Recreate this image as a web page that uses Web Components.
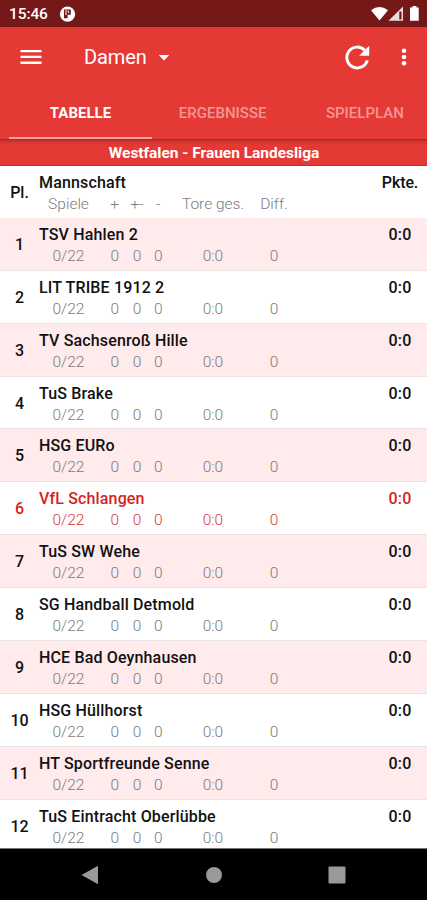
<!DOCTYPE html>
<html lang="de">
<head>
<meta charset="UTF-8">
<meta name="viewport" content="width=device-width, initial-scale=1">
<title>Damen - Tabelle</title>
<style>
    html, body { margin: 0; height: 100%; }
    body { font-family: Roboto, 'Liberation Sans', sans-serif; background: #000; overflow: hidden; }
</style>
</head>
<body>
<league-app></league-app>

<script>
class StatusBar extends HTMLElement {
    connectedCallback() {
        this.attachShadow({ mode: 'open' });
        this.shadowRoot.innerHTML = `
            <style>
                :host { display: flex; align-items: center; flex: none; height: 27px; box-sizing: border-box; padding: 1px 7px 0 9px; background: #741818; color: #fff; }
                .time { font-size: 15.5px; font-weight: 500; line-height: 26px; width: 50px; letter-spacing: -0.1px; }
                .right { margin-left: auto; }
                svg { display: block; }
            </style>
            <span class="time"><slot></slot></span>
            <svg width="17" height="17" viewBox="0 0 17 17">
                <circle cx="8.5" cy="8.2" r="7.6" fill="#fff"/>
                <path d="M5 3.500h6.800v5.200H8.600v3.600H5z" fill="#741818"/>
                <path d="M7 4v5M9.300 4.500v2.500" stroke="#fff" stroke-width="1" fill="none"/>
            </svg>
            <svg class="right" width="50" height="18" viewBox="0 0 50 18">
                <path d="M1 5.200Q9.500 -1.300 18 5.200L9.500 15.400z" fill="#fff"/>
                <path d="M33 1.500V15.700H18.500z" fill="#fff" fill-opacity=".85"/>
                <path d="M29.300 6.500h2.200v8h-2.200z" fill="#741818"/>
                <path d="M42.500 1h4v1.600h2.200V15.700h-8.700V2.600h2.500z" fill="#fff"/>
            </svg>
        `;
    }
}

class AppToolbar extends HTMLElement {
    connectedCallback() {
        this.attachShadow({ mode: 'open' });
        this.shadowRoot.innerHTML = `
            <style>
                :host { display: flex; align-items: center; flex: none; height: 61px; box-sizing: border-box; padding: 0 20px 2px 20px; background: #e53935; color: #fff; }
                svg { display: block; fill: #fff; }
                .title { font-size: 20px; line-height: 28px; margin-left: 42px; width: 62px; white-space: nowrap; letter-spacing: -0.1px; padding-top: 1px; }
                .arrow { margin-left: 12px; margin-top: 2px; }
                .refresh { margin-left: auto; margin-right: 31px; }
            </style>
            <svg width="22" height="16" viewBox="0 0 22 16"><path d="M.5 1h21v2.300H.5zM.5 6.800h21v2.300H.5zM.5 12.600h21v2.300H.5z"/></svg>
            <span class="title"><slot></slot></span>
            <svg class="arrow" width="12" height="6" viewBox="0 0 12 6"><path d="M.7 0h10.600L6 5.600z"/></svg>
            <svg class="refresh" width="26" height="26" viewBox="0 0 26 26">
                <path d="M20.700 6.200A10.400 10.400 0 1 0 23.300 16.300" fill="none" stroke="#fff" stroke-width="3"/>
                <path d="M25.200 1.800v10H15.200z"/>
            </svg>
            <svg width="6" height="20" viewBox="0 0 6 20"><circle cx="3" cy="3.800" r="2.300"/><circle cx="3" cy="10" r="2.300"/><circle cx="3" cy="16.200" r="2.300"/></svg>
        `;
    }
}

class TabBar extends HTMLElement {
    connectedCallback() {
        this.attachShadow({ mode: 'open' });
        this.shadowRoot.innerHTML = `
            <style>
                :host { display: flex; flex: none; height: 51px; padding-left: 9.4px; background: #e53935; overflow: hidden; }
            </style>
            <slot></slot>
        `;
    }
}

class TabItem extends HTMLElement {
    connectedCallback() {
        this.attachShadow({ mode: 'open' });
        this.shadowRoot.innerHTML = `
            <style>
                :host { display: block; flex: none; width: 142.2px; box-sizing: border-box; text-align: center; white-space: nowrap; font-size: 15px; font-weight: 500; line-height: 50px; color: #f29794; border-bottom: 2px solid transparent; }
                :host([active]) { color: #fff; font-weight: 700; border-bottom-color: #f6a5a2; }
            </style>
            <slot></slot>
        `;
    }
}

class LeagueBanner extends HTMLElement {
    connectedCallback() {
        this.attachShadow({ mode: 'open' });
        this.shadowRoot.innerHTML = `
            <style>
                :host { display: block; flex: none; height: 27px; box-sizing: border-box; border-bottom: 1px solid #e01e1b; background: linear-gradient(#a92a27 0, #c9322f 2px, #e23834 5px, #e53935 8px); color: #fff; text-align: center; font-size: 15.5px; font-weight: 700; line-height: 29px; padding-left: 1px; letter-spacing: -0.02px; }
            </style>
            <slot></slot>
        `;
    }
}

class TableRow extends HTMLElement {
    connectedCallback() {
        const get = name => this.getAttribute(name);
        this.attachShadow({ mode: 'open' });
        this.shadowRoot.innerHTML = `
            <style>
                :host { display: flex; flex: none; height: 52.9px; box-sizing: border-box; border-bottom: 1px solid #e9e3e4; background: #fff; color: #111; --muted: #7c7c7c; }
                :host([tinted]) { background: #ffeaec; }
                :host([own]) { color: #d61f1f; --muted: #d93a3a; }
                :host([head]) { height: 51.9px; border-bottom: 0; }
                .place { width: 39px; text-align: center; font-size: 16px; font-weight: 500; line-height: 54px; }
                .main { flex: 1; padding-top: 6px; }
                .top { display: flex; justify-content: space-between; font-size: 16px; font-weight: 500; line-height: 21px; letter-spacing: 0.15px; white-space: nowrap; }
                .points { width: 54px; text-align: center; }
                :host([head]) .points { letter-spacing: -0.1px; }
                .stats { display: grid; grid-template-columns: 59px 28.5px 21px 21.5px 88px 34px; margin-top: 1px; font-size: 15.5px; font-weight: 300; line-height: 21px; color: var(--muted); text-align: center; white-space: nowrap; }
                .stats span:nth-child(2) { padding-left: 5px; }
            </style>
            <div class="place">${get('place')}</div>
            <div class="main">
                <div class="top"><span><slot></slot></span><span class="points">${get('points')}</span></div>
                <div class="stats">${get('stats').split('|').map(s => `<span>${s}</span>`).join('')}</div>
            </div>
        `;
    }
}

class NavBar extends HTMLElement {
    connectedCallback() {
        this.attachShadow({ mode: 'open' });
        this.shadowRoot.innerHTML = `
            <style>
                :host { display: flex; flex: none; align-items: center; justify-content: space-between; height: 52px; box-sizing: border-box; border-top: 1px solid #777; padding: 0 81px; background: #000; }
                svg { display: block; fill: #999; }
            </style>
            <svg width="18" height="20" viewBox="0 0 18 20"><path d="M.5 10L17 .8v18.400z"/></svg>
            <svg width="18" height="18" viewBox="0 0 18 18"><circle cx="9" cy="9" r="8"/></svg>
            <svg width="18" height="18" viewBox="0 0 18 18"><rect x=".5" y=".5" width="17" height="17" rx="1"/></svg>
        `;
    }
}

const teams = [
    'TSV Hahlen 2', 'LIT TRIBE 1912 2', 'TV Sachsenroß Hille', 'TuS Brake',
    'HSG EURo', 'VfL Schlangen', 'TuS SW Wehe', 'SG Handball Detmold',
    'HCE Bad Oeynhausen', 'HSG Hüllhorst', 'HT Sportfreunde Senne', 'TuS Eintracht Oberlübbe'
];

class LeagueApp extends HTMLElement {
    connectedCallback() {
        const rows = teams.map((team, i) => `
            <table-row place="${i + 1}" points="0:0" stats="0/22|0|0|0|0:0|0"
                ${i % 2 === 0 ? 'tinted' : ''} ${team === 'VfL Schlangen' ? 'own' : ''}>${team}</table-row>
        `).join('');

        this.attachShadow({ mode: 'open' });
        this.shadowRoot.innerHTML = `
            <style>
                :host { display: flex; flex-direction: column; height: 900px; }
                main { flex: 1; min-height: 0; display: flex; flex-direction: column; overflow: hidden; background: #fff; }
            </style>
            <status-bar>15:46</status-bar>
            <app-toolbar>Damen</app-toolbar>
            <tab-bar>
                <tab-item active>TABELLE</tab-item>
                <tab-item>ERGEBNISSE</tab-item>
                <tab-item>SPIELPLAN</tab-item>
            </tab-bar>
            <league-banner>Westfalen - Frauen Landesliga</league-banner>
            <main>
                <table-row head place="Pl." points="Pkte." stats="Spiele|+|+-|-|Tore ges.|Diff.">Mannschaft</table-row>
                ${rows}
            </main>
            <nav-bar></nav-bar>
        `;
    }
}

customElements.define('status-bar', StatusBar);
customElements.define('app-toolbar', AppToolbar);
customElements.define('tab-bar', TabBar);
customElements.define('tab-item', TabItem);
customElements.define('league-banner', LeagueBanner);
customElements.define('table-row', TableRow);
customElements.define('nav-bar', NavBar);
customElements.define('league-app', LeagueApp);
</script>
</body>
</html>
